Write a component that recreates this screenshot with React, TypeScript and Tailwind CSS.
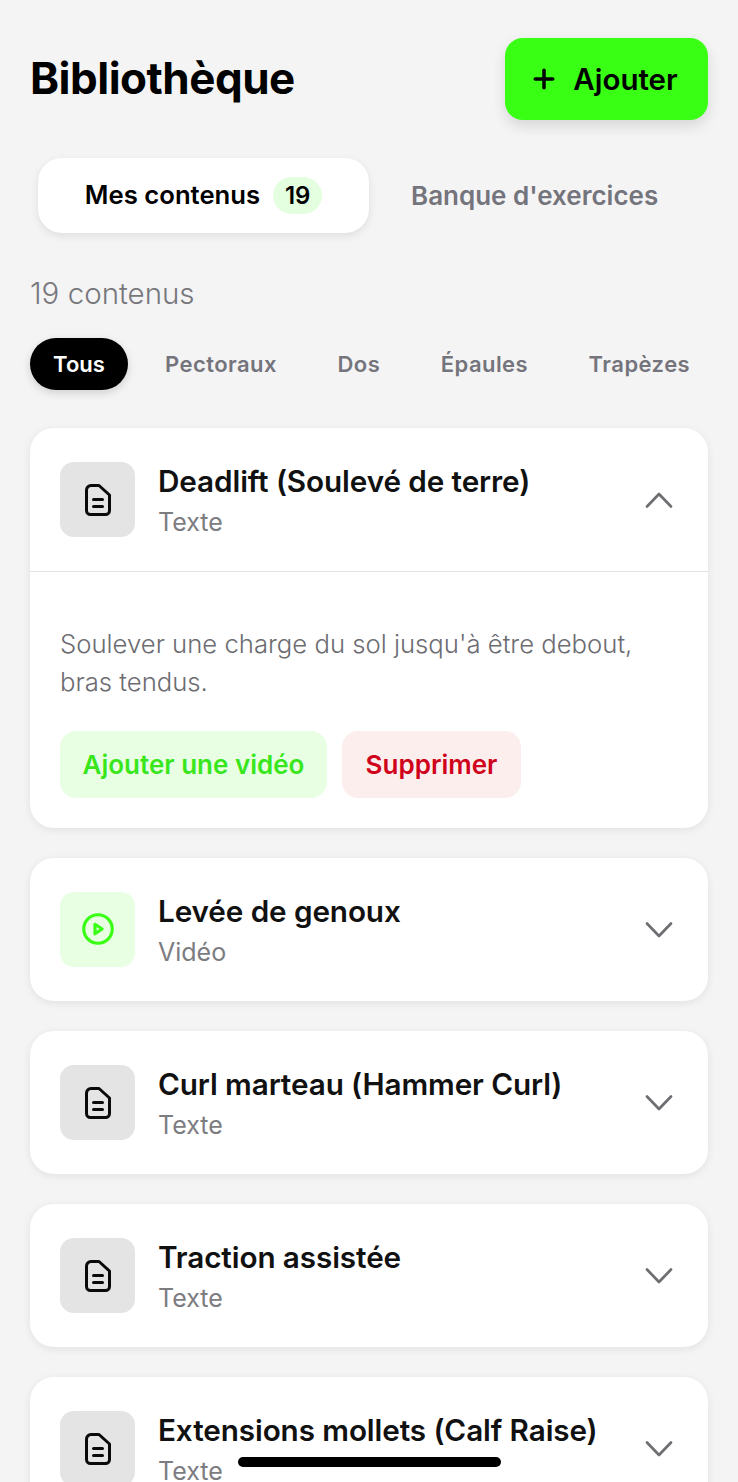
import { Plus } from 'lucide-react';

const font = "font-['Inter',sans-serif]";

const filters = ['Pectoraux', 'Dos', 'Épaules', 'Trapèzes'];

const items = [
  { title: 'Levée de genoux', kind: 'Vidéo' },
  { title: 'Curl marteau (Hammer Curl)', kind: 'Texte' },
  { title: 'Traction assistée', kind: 'Texte' },
  { title: 'Extensions mollets (Calf Raise)', kind: 'Texte' },
];

function DocIcon() {
  return (
    <svg viewBox="0 0 32 36" className="w-[32px] h-[36px]" fill="none" stroke="#0a0a0a" strokeWidth="3" strokeLinecap="round" strokeLinejoin="round">
      <path d="M9 3.500h8l10.500 9.500v15.500a4 4 0 0 1-4 4h-15a4 4 0 0 1-4-4V8a4.500 4.500 0 0 1 4.500-4.500z" />
      <path d="M11.500 17.500h9M11.500 24.500h9" />
    </svg>
  );
}

function VideoIcon() {
  return (
    <svg viewBox="0 0 24 24" className="w-[36px] h-[36px] -mt-[1px]" fill="none" stroke="#39ff14" strokeWidth="2.100" strokeLinecap="round" strokeLinejoin="round">
      <circle cx="12" cy="12" r="9.500" />
      <path d="M10 8.800l4.800 3.200-4.800 3.200z" />
    </svg>
  );
}

function Chevron({ up }: { up?: boolean }) {
  return (
    <svg viewBox="0 0 30 18" className="w-[30px] h-[18px] shrink-0" fill="none" stroke="#6e6e73" strokeWidth="2.700" strokeLinecap="round" strokeLinejoin="round">
      <path d={up ? 'M3 15.500L15 3l12 12.500' : 'M3 2.500L15 15 27 2.500'} />
    </svg>
  );
}

function CardHead({ title, kind, open }: { title: string; kind: string; open?: boolean }) {
  const video = kind === 'Vidéo';
  return (
    <div className={`flex items-center pl-[30px] pr-[34px] ${open ? 'h-[144px] border-b border-[#e2e2e2]' : 'h-[143px]'}`}>
      <div className={`w-[75px] h-[75px] rounded-[14px] flex items-center justify-center shrink-0 ${video ? 'bg-[#e8ffe4]' : 'bg-[#e4e4e4]'}`}>
        {video ? <VideoIcon /> : <DocIcon />}
      </div>
      <div className="ml-[23px] flex-1 min-w-0">
        <div className="text-[29.700px] leading-[38px] font-semibold text-[#111111] tracking-[-0.100px] whitespace-nowrap">{title}</div>
        <div className="mt-[6px] text-[25px] leading-[32px] text-[#7c7c81]">{kind}</div>
      </div>
      <Chevron up={open} />
    </div>
  );
}

export default function App() {
  return (
    <div className={`relative h-[1482px] w-[738px] overflow-hidden bg-[#f4f4f5] ${font}`}>
      <div className="px-[30px] pt-[38px]">
        <header className="flex items-center justify-between">
          <h1 className="text-[44px] leading-[54px] font-bold text-black tracking-[-0.500px] -mt-[2px]">Bibliothèque</h1>
          <button className="w-[203px] h-[82px] rounded-[18px] bg-[#39ff14] shadow-[0_6px_14px_rgba(0,0,0,0.12)] flex items-center justify-center gap-[14px] text-[29.500px] font-semibold text-black">
            <Plus className="w-[30px] h-[30px] -ml-[6px]" strokeWidth={2.800} />
            Ajouter
          </button>
        </header>

        <div className="mt-[38px] flex items-center pl-[8px]">
          <div className="w-[331px] h-[75px] rounded-[24px] bg-white shadow-[0_3px_8px_rgba(0,0,0,0.09)] flex items-center justify-center gap-[13px]">
            <span className="text-[25.700px] font-semibold text-black">Mes contenus</span>
            <span className="w-[49px] h-[37px] rounded-full bg-[#e4ffdf] flex items-center justify-center text-[24px] font-semibold text-black">19</span>
          </div>
          <span className="ml-[42px] text-[26px] font-semibold text-[#74747c]">Banque d'exercices</span>
        </div>

        <p className="mt-[41px] text-[29.500px] leading-[38px] font-light text-[#77777c]">19 contenus</p>

        <div className="mt-[26px] flex items-center">
          <span className="w-[98px] h-[52px] rounded-full bg-black text-white text-[22px] font-semibold flex items-center justify-center shadow-[0_3px_8px_rgba(0,0,0,0.15)]">Tous</span>
          <div className="ml-[37px] flex gap-[60.500px] text-[22px] tracking-[0.450px] font-semibold text-[#74747c]">
            {filters.map((f) => (
              <span key={f}>{f}</span>
            ))}
          </div>
        </div>

        <div className="mt-[38px] flex flex-col gap-[30px]">
          <section className="rounded-[24px] bg-white shadow-[0_2px_8px_rgba(0,0,0,0.08)]">
            <CardHead title="Deadlift (Soulevé de terre)" kind="Texte" open />
            <div className="px-[30px] pt-[53px] pb-[30px]">
              <p className="text-[25.700px] leading-[38px] font-light text-[#6c6c71]">
                Soulever une charge du sol jusqu'à être debout,
                <br />
                bras tendus.
              </p>
              <div className="mt-[30px] flex gap-[15px]">
                <button className="w-[267px] h-[67px] rounded-[16px] bg-[#e8ffe4] text-[26px] font-semibold text-[#39e61c]">Ajouter une vidéo</button>
                <button className="w-[179px] h-[67px] rounded-[16px] bg-[#fdeeee] text-[26px] font-semibold text-[#d0021b]">Supprimer</button>
              </div>
            </div>
          </section>
          {items.map((item) => (
            <section key={item.title} className="rounded-[24px] bg-white shadow-[0_2px_8px_rgba(0,0,0,0.08)]">
              <CardHead title={item.title} kind={item.kind} />
            </section>
          ))}
        </div>
      </div>

      {/* home indicator */}
      <div className="absolute left-[238px] top-[1457px] w-[263px] h-[10px] rounded-full bg-black" />
    </div>
  );
}
